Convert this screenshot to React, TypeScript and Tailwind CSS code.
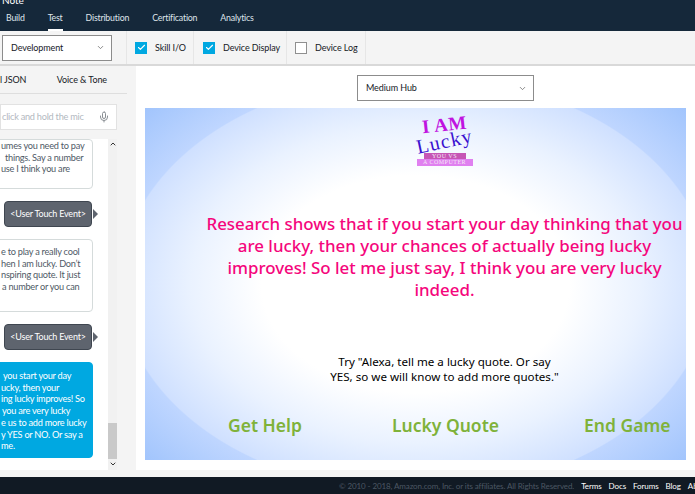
import { Check, ChevronDown, ChevronUp, Mic } from 'lucide-react';

const tabs = ['Build', 'Test', 'Distribution', 'Certification', 'Analytics'];
const footerLinks = ['Terms', 'Docs', 'Forums', 'Blog', 'About'];

function Bubble({ lines, className }: { lines: { text: string; indent: string }[]; className: string }) {
  return (
    <div className={`ml-[-10px] w-[103px] shrink-0 rounded-[4px] border pl-[10px] ${className}`}>
      {lines.map((line) => (
        <p key={line.text} className={`whitespace-nowrap text-[9.2px] leading-[11.7px] tracking-[-0.25px] ${line.indent}`}>
          {line.text}
        </p>
      ))}
    </div>
  );
}

function TouchEvent() {
  return (
    <div className="flex shrink-0 items-center pl-[4px]">
      <div className="flex h-[26px] w-[88px] items-center justify-center whitespace-nowrap rounded-[4px] border border-[#3f4650] bg-[#5e646e] text-[9px] tracking-[-0.2px] text-white">
        &lt;User Touch Event&gt;
      </div>
      <div className="ml-[1px] h-0 w-0 border-y-[5px] border-l-[5px] border-y-transparent border-l-[#5e646e]" />
    </div>
  );
}

function Toggle({ label, checked, className }: { label: string; checked: boolean; className: string }) {
  return (
    <div className={`flex h-full items-center gap-[8px] border-r border-[#e6e6e6] ${className}`}>
      {checked ? (
        <span className="flex h-[12px] w-[12px] items-center justify-center bg-[#00a8e1]">
          <Check size={9} strokeWidth={3} className="text-white" />
        </span>
      ) : (
        <span className="h-[12px] w-[12px] border border-[#8f8f8f] bg-white" />
      )}
      <span className="whitespace-nowrap text-[9px] tracking-[-0.1px] text-[#16191f]">{label}</span>
    </div>
  );
}

export default function App() {
  return (
    <div className="flex h-[494px] w-[695px] flex-col overflow-hidden bg-[#f4f4f4] font-['Lato','Liberation_Sans',sans-serif]">
      <header className="h-[31px] shrink-0 bg-[#15283a]">
        <p className="h-[6px] overflow-hidden pl-[2px] text-[10px] leading-[1px] text-white">Note</p>
        <nav className="flex h-[25px] items-start gap-[23px] pl-[6px] pt-[5px]">
          {tabs.map((tab) => (
            <div key={tab} className="relative text-[8.8px] leading-[13px] tracking-[-0.2px] text-[#dfe5ea]">
              {tab}
              {tab === 'Test' && <span className="absolute left-0 right-0 top-[18px] h-[2px] bg-white" />}
            </div>
          ))}
        </nav>
      </header>

      <div className="flex h-[35px] shrink-0 items-center border-b-2 border-[#d9d9d9]">
        <div className="flex h-full w-[127px] shrink-0 items-center border-r border-[#e6e6e6] pl-[2px]">
          <div className="flex h-[26px] w-[110px] items-center justify-between border border-[#8c8c8c] bg-white pl-[8px] pr-[6px] text-[9px] tracking-[-0.1px] text-[#16191f]">
            Development
            <ChevronDown size={9} className="text-[#666]" />
          </div>
        </div>
        <Toggle label="Skill I/O" checked className="w-[67px] pl-[8px]" />
        <Toggle label="Device Display" checked className="w-[93px] pl-[9px]" />
        <Toggle label="Device Log" checked={false} className="w-[79px] pl-[8px]" />
      </div>

      <div className="flex min-h-0 flex-1">
        <aside className="flex w-[127px] shrink-0 flex-col">
          <div className="flex h-[28px] shrink-0 items-center justify-between border-b border-[#dedede] pr-[20px] text-[9px] tracking-[-0.1px] text-[#16191f]">
            <span>l JSON</span>
            <span>Voice &amp; Tone</span>
          </div>
          <div className="mt-[10px] flex h-[26px] w-[117px] shrink-0 items-center justify-between border border-[#e2e2e2] bg-white pl-[1px] pr-[6px] text-[9.2px] tracking-[-0.25px] text-[#b3b9bf]">
            click and hold the mic
            <Mic size={12} className="text-[#8a8f94]" />
          </div>
          <div className="mt-[9px] flex h-[331px] w-[117px] shrink-0 overflow-hidden bg-white">
            <div className="flex w-[108px] shrink-0 flex-col gap-[12px] overflow-hidden">
              <Bubble
                className="h-[50px] border-[#d5dbdb] text-[#4f5a66]"
                lines={[
                  { text: 'umes you need to pay', indent: '' },
                  { text: 'things. Say a number', indent: 'pl-[4px]' },
                  { text: 'use I think you are', indent: '' },
                ]}
              />
              <TouchEvent />
              <Bubble
                className="h-[73px] border-[#d5dbdb] pt-[6px] text-[#4f5a66]"
                lines={[
                  { text: 'e to play a really cool', indent: '' },
                  { text: 'hen I am lucky. Don’t', indent: '' },
                  { text: 'nspiring quote. It just', indent: '' },
                  { text: 'a number or you can', indent: 'pl-[1px]' },
                ]}
              />
              <TouchEvent />
              <Bubble
                className="h-[96px] border-[#00a8e1] bg-[#00a8e1] pt-[7px] text-white"
                lines={[
                  { text: 'you start your day', indent: 'pl-[2px]' },
                  { text: 'ucky, then your', indent: '' },
                  { text: 'ing lucky improves! So', indent: '' },
                  { text: 'you are very lucky', indent: 'pl-[1px]' },
                  { text: 'e us to add more lucky', indent: '' },
                  { text: 'y YES or NO. Or say a', indent: '' },
                  { text: 'me.', indent: '' },
                ]}
              />
            </div>
            <div className="flex w-[9px] shrink-0 flex-col items-center bg-[#f1f1f1]">
              <ChevronUp size={8} strokeWidth={3} className="mt-[1px] text-[#333]" />
              <div className="mt-[275px] h-[36px] w-full shrink-0 bg-[#c9c9c9]" />
              <ChevronDown size={8} strokeWidth={3} className="mt-[1px] text-[#333]" />
            </div>
          </div>
        </aside>

        <main className="ml-[9px] flex h-[404px] flex-1 flex-col bg-white px-[9px] pt-[9px]">
          <div className="ml-[212px] flex h-[26px] w-[177px] shrink-0 items-center justify-between border border-[#8c8c8c] bg-white pl-[8px] pr-[6px] text-[9px] tracking-[-0.1px] text-[#16191f]">
            Medium Hub
            <ChevronDown size={9} className="text-[#666]" />
          </div>
          <div className="mt-[7px] flex h-[352px] w-[541px] shrink-0 flex-col items-center bg-[radial-gradient(296px_209px_at_center,#ffffff_0%,#ffffff_52%,#eaf2ff_76%,#d8e6ff_92%,#cfe0ff_99.5%,#bfd6ff_100%,#9dc2fc_128%)] pl-[58px] font-['Noto_Sans','Open_Sans',sans-serif]">
            <div className="flex h-[58px] w-[56px] shrink-0 flex-col items-center pt-[9px] font-['Liberation_Serif',serif]">
              <p className="-rotate-6 whitespace-nowrap text-[19px] font-bold leading-[15px] tracking-[0.5px] text-[#c014e0]">I AM</p>
              <p className="-rotate-12 whitespace-nowrap text-[20px] leading-[19px] tracking-[1.2px] text-[#3a10d0]">Lucky</p>
              <p className="mt-[2px] h-[6px] w-[42px] shrink-0 overflow-hidden whitespace-nowrap bg-[#c655b5] text-center text-[6px] leading-[6px] tracking-[0.5px] text-[#f5e6f5]">YOU VS</p>
              <p className="h-[7px] w-[56px] shrink-0 overflow-hidden whitespace-nowrap bg-[#e080f0] text-center text-[6px] leading-[7px] tracking-[0.5px] text-[#f5e6f5]">A COMPUTER</p>
            </div>
            <p className="mt-[47px] w-[483px] shrink-0 text-center text-[16.9px] font-medium leading-[22px] text-[#f5067c]">
              Research shows that if you start your day thinking that you are lucky, then your chances of actually being lucky improves! So let me just say, I think you are very lucky indeed.
            </p>
            <p className="mt-[53px] shrink-0 text-center text-[11.6px] leading-[15px] text-black">
              Try "Alexa, tell me a lucky quote. Or say
              <br />
              YES, so we will know to add more quotes."
            </p>
            <div className="ml-[-58px] mt-[29px] flex w-[541px] gap-[88px] pl-[83px] text-[17.5px] font-semibold leading-[24px] text-[#7fb23a]">
              <span>Get Help</span>
              <span className="ml-[2px]">Lucky Quote</span>
              <span className="ml-[-3px]">End Game</span>
            </div>
          </div>
        </main>
      </div>

      <footer className="flex h-[17px] shrink-0 items-center gap-[7px] whitespace-nowrap bg-[#111a24] pl-[339px] text-[8px] tracking-[-0.1px] text-white">
        <span className="text-[#4c5763]">© 2010 - 2018, Amazon.com, Inc. or its affiliates. All Rights Reserved.</span>
        {footerLinks.map((link) => (
          <span key={link}>{link}</span>
        ))}
      </footer>
    </div>
  );
}
